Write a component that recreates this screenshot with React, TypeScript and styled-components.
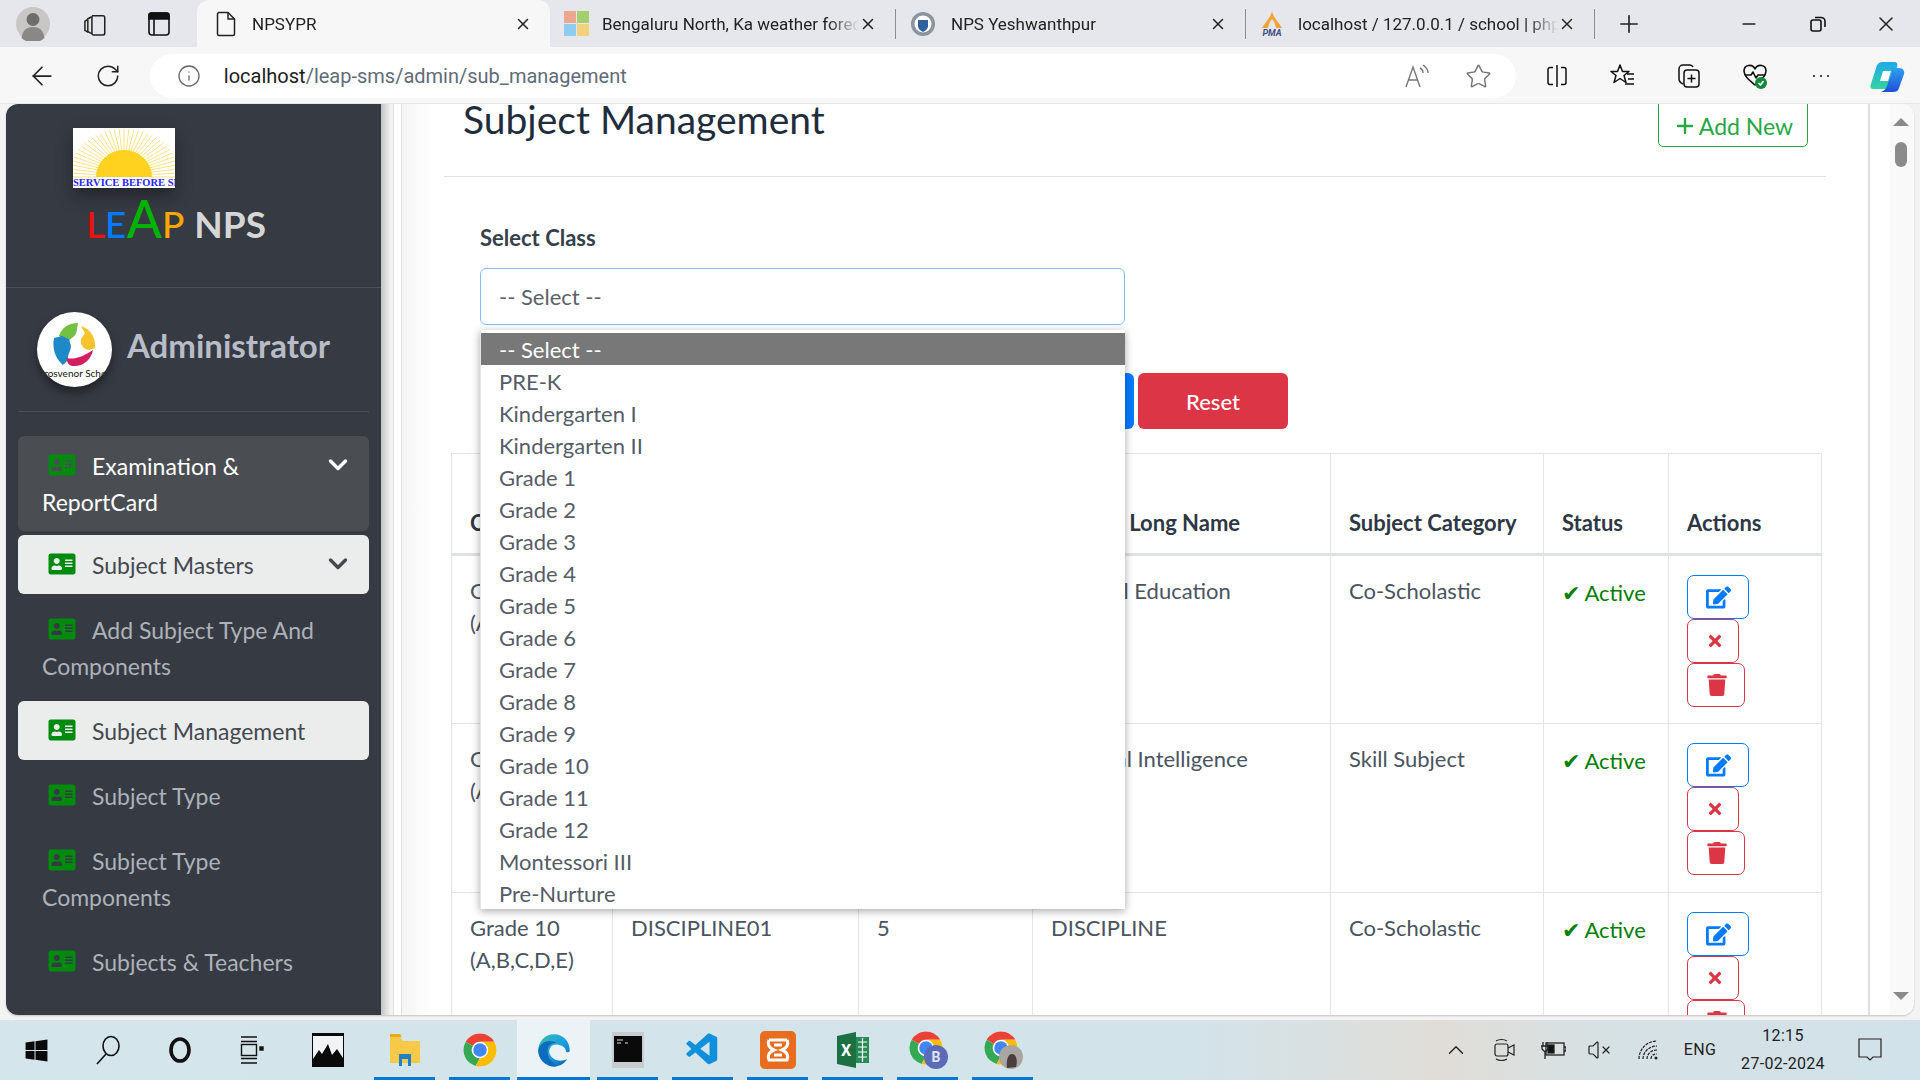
import React from "react";
import styled, { createGlobalStyle } from "styled-components";
import { ArrowLeft, ChevronUp, Info, Minus, Plus, RotateCw, Star, VolumeX, X } from "lucide-react";
import { FaAddressCard, FaEdit, FaTimes, FaTrash, FaWindows } from "react-icons/fa";
import { VscVscode } from "react-icons/vsc";

const sans = `Lato, "Open Sans", sans-serif`;
const chrome = `Roboto, "Noto Sans", sans-serif`;

const GlobalStyle = createGlobalStyle`
  html, body { margin: 0; padding: 0; height: 100%; overflow: hidden; }
  body { font-family: ${sans}; background: #f3f3f3; }
  * { box-sizing: border-box; }
`;

const Screen = styled.div`
  width: 1920px;
  height: 1080px;
  display: flex;
  flex-direction: column;
  overflow: hidden;
`;

/* browser tabs */
const TabStrip = styled.div`
  height: 47px;
  display: flex;
  align-items: stretch;
  background: #e6e7ec;
  font-family: ${chrome};
  color: #222;
`;
const StripButton = styled.div<{ $w: number }>`
  width: ${(p) => p.$w}px;
  display: flex;
  align-items: center;
  justify-content: center;
`;
const Tab = styled.div<{ $w: number; $active?: boolean }>`
  width: ${(p) => p.$w}px;
  display: flex;
  align-items: center;
  padding: 0 18px 0 ${(p) => (p.$active ? 19 : 14)}px;
  font-size: 17px;
  background: ${(p) => (p.$active ? "#f7f7f7" : "transparent")};
  border-radius: 12px 12px 0 0;
`;
const TabIcon = styled.div<{ $w?: number }>`
  width: ${(p) => p.$w ?? 38}px;
  flex: none;
  display: flex;
  align-items: center;
`;
const TabTitle = styled.div`
  flex: 1;
  min-width: 0;
  white-space: nowrap;
  overflow: hidden;
  -webkit-mask-image: linear-gradient(90deg, #000 88%, transparent);
  mask-image: linear-gradient(90deg, #000 88%, transparent);
`;
const TabSep = styled.div`
  width: 1px;
  height: 30px;
  align-self: center;
  background: #8d8d8d;
`;

/* address bar row */
const Toolbar = styled.div`
  height: 57px;
  padding: 7px 0 5px 9px;
  display: flex;
  align-items: stretch;
  background: #f7f7f7;
  border-bottom: 1px solid #e8e8e8;
  font-family: ${chrome};
`;
const ToolButton = styled.div`
  width: 66px;
  display: flex;
  align-items: center;
  justify-content: center;
  color: #222;
`;
const AddressPill = styled.div`
  width: 1368px;
  margin: 0 8px 0 9px;
  padding: 0 24px 0 27px;
  display: flex;
  align-items: center;
  background: #fff;
  border-radius: 23px;
  color: #666;
`;
const Url = styled.div`
  flex: 1;
  margin-left: 23px;
  font-size: 20px;
  color: #5f6b78;
  span { color: #1c1c1c; }
`;
const PillIcon = styled.div`
  margin-left: 35px;
  display: flex;
  color: #777;
`;

/* page frame */
const Desk = styled.div`
  height: 916px;
  padding: 0 6px 5px;
  background: #f3f3f3;
`;
const Frame = styled.div`
  height: 100%;
  display: flex;
  background: #fff;
  border-radius: 12px;
  overflow: hidden;
  box-shadow: 0 1px 2px rgba(0, 0, 0, 0.2);
`;

/* sidebar */
const Sidebar = styled.aside`
  width: 375px;
  flex: none;
  background: #363a42;
  overflow: hidden;
`;
const BrandBlock = styled.div`
  height: 184px;
  padding: 24px 0 0 67px;
  border-bottom: 1px solid #4b4f57;
`;
const LogoBox = styled.div`
  width: 102px;
  height: 60px;
  background: #fff;
  overflow: hidden;
  box-shadow: 0 8px 16px rgba(0, 0, 0, 0.35);
  svg { display: block; }
`;
const LogoCaption = styled.div`
  font-family: "Liberation Serif", serif;
  font-size: 10.5px;
  line-height: 10px;
  font-weight: 700;
  color: #2626f0;
  white-space: nowrap;
  text-align: center;
`;
const Brand = styled.div`
  margin: 4px 0 0 13px;
  display: flex;
  align-items: baseline;
  font-size: 37px;
  line-height: 52px;
  font-weight: 500;
`;
const BrandLetter = styled.span<{ $color: string; $big?: boolean }>`
  color: ${(p) => p.$color};
  font-size: ${(p) => (p.$big ? 52 : 37)}px;
`;
const BrandName = styled.span`
  margin-left: 10px;
  color: #d6d6d6;
  font-weight: 700;
`;
const UserRow = styled.div`
  margin: 0 12px;
  padding: 24px 0 24px 19px;
  display: flex;
  align-items: center;
  gap: 15px;
  border-bottom: 1px solid #4b4f57;
`;
const Avatar = styled.div`
  width: 75px;
  height: 75px;
  border-radius: 50%;
  background: #fff;
  overflow: hidden;
  text-align: center;
  box-shadow: 0 6px 10px rgba(0, 0, 0, 0.4);
  svg { display: block; margin: 10px auto 0; }
`;
const AvatarCaption = styled.div`
  font-size: 10px;
  line-height: 11px;
  color: #111;
  white-space: nowrap;
`;
const UserName = styled.div`
  margin-top: -10px;
  font-size: 33px;
  font-weight: 700;
  color: #b9bcc7;
`;
const Nav = styled.nav`
  padding: 24px 12px 0;
`;
const NavItem = styled.div<{ $tone?: "open" | "active"; $gap?: number }>`
  position: relative;
  margin-bottom: ${(p) => p.$gap ?? 6}px;
  padding: 12px 24px 11px;
  font-size: 23px;
  line-height: 36px;
  border-radius: 6px;
  color: ${(p) => (p.$tone === "open" ? "#fff" : p.$tone === "active" ? "#44484f" : "#adb1b9")};
  background: ${(p) => (p.$tone === "open" ? "#4a4e52" : p.$tone === "active" ? "#ebeded" : "transparent")};
`;
const NavIcon = styled(FaAddressCard)`
  width: 30px;
  height: 24px;
  margin: 0 15px 0 5px;
  color: #008a0e;
  vertical-align: -2px;
`;
const NavChevron = styled.svg`
  position: absolute;
  top: 22px;
  right: 21px;
`;

/* gutters left and right of the page */
const ShadowGutter = styled.div`
  width: 12px;
  flex: none;
  background: linear-gradient(90deg, #c4c4c4, #f3f3f3 80%);
`;
const LineGutter = styled.div<{ $w: number }>`
  width: ${(p) => p.$w}px;
  flex: none;
  border-left: 1px solid #dddfe3;
`;

/* page content */
const Content = styled.main`
  width: 1468px;
  flex: none;
  padding: 0 42px;
  border-left: 1px solid #dddfe3;
  border-right: 1px solid #dddfe3;
  background: linear-gradient(90deg, #f5f5f5, #fff 30px);
  overflow: hidden;
`;
const PageHead = styled.div`
  height: 73px;
  padding: 0 18px 0 19px;
  display: flex;
  justify-content: space-between;
  align-items: flex-start;
  border-bottom: 1px solid #e0e0e0;
`;
const Title = styled.h1`
  margin: -8px 0 0;
  font-size: 39px;
  line-height: 46px;
  font-weight: 400;
  color: #1f2d3d;
`;
const AddButton = styled.button`
  width: 150px;
  height: 60px;
  margin-top: -17px;
  padding: 17px 0 0;
  display: flex;
  align-items: center;
  justify-content: center;
  gap: 2px;
  font: 400 23px ${sans};
  color: #28a745;
  background: #fff;
  border: 1.5px solid #28a745;
  border-radius: 5px;
`;
const FormBlock = styled.div`
  padding: 46px 0 0 36px;
`;
const FieldLabel = styled.label`
  display: block;
  font-size: 22px;
  line-height: 30px;
  font-weight: 700;
  color: #36404c;
`;
const SelectWrap = styled.div`
  position: relative;
  width: 645px;
  margin-top: 15px;
`;
const SelectBox = styled.div`
  height: 57px;
  padding: 0 18px;
  display: flex;
  align-items: center;
  font-size: 22px;
  color: #5a626b;
  border: 1.5px solid #80bdff;
  border-radius: 6px;
`;
const OptionList = styled.div`
  position: absolute;
  z-index: 5;
  top: 62px;
  left: 0;
  width: 100%;
  padding-top: 3px;
  background: #fff;
  border-left: 1px solid #e4e4e4;
  box-shadow: 0 2px 8px rgba(0, 0, 0, 0.35);
`;
const Option = styled.div<{ $selected?: boolean }>`
  height: 32px;
  padding: 0 18px;
  display: flex;
  align-items: center;
  font-size: 22px;
  color: ${(p) => (p.$selected ? "#fff" : "#555c66")};
  background: ${(p) => (p.$selected ? "#787878" : "transparent")};
`;
const ButtonRow = styled.div`
  margin-top: 48px;
  display: flex;
  gap: 4px;
`;
const SolidButton = styled.button<{ $bg: string; $w: number }>`
  width: ${(p) => p.$w}px;
  height: 56px;
  font: 500 22px ${sans};
  color: #fff;
  background: ${(p) => p.$bg};
  border: none;
  border-radius: 6px;
`;
const Table = styled.table`
  width: 1370px;
  margin: 24px 0 0 7px;
  table-layout: fixed;
  border-collapse: collapse;
  font-size: 22px;
  line-height: 32px;
  color: #4a5460;
`;
const Th = styled.th`
  height: 101px;
  padding: 0 18px 14px;
  vertical-align: bottom;
  text-align: left;
  font-weight: 700;
  color: #2e3744;
  border: 1px solid #e2e4e8;
  border-bottom: 3px solid #dee2e6;
`;
const Td = styled.td`
  height: 169px;
  padding: 19px 18px 0;
  vertical-align: top;
  border: 1px solid #e2e4e8;
`;
const StatusText = styled.div`
  margin-top: 2px;
  color: #008000;
  white-space: nowrap;
  span { font-family: "DejaVu Sans", sans-serif; margin-right: 4px; }
`;
const ActionStack = styled.div`
  display: flex;
  flex-direction: column;
  align-items: flex-start;
`;
const ActionButton = styled.button<{ $color: string; $w: number }>`
  width: ${(p) => p.$w}px;
  height: 44px;
  padding: 0 0 0 18px;
  display: flex;
  align-items: center;
  color: ${(p) => p.$color};
  background: #fff;
  border: 1.5px solid ${(p) => p.$color};
  border-radius: 7px;
`;

/* page scrollbar */
const ScrollBar = styled.div`
  width: 36px;
  flex: none;
  padding: 14px 0 15px 13px;
  display: flex;
  flex-direction: column;
  background: linear-gradient(90deg, #fff 13px, #f9f9f9 13px);
`;
const ScrollArrow = styled.div<{ $down?: boolean }>`
  width: 0;
  margin: ${(p) => (p.$down ? "auto 0 0 3px" : "0 0 0 3px")};
  border-left: 8px solid transparent;
  border-right: 8px solid transparent;
  border-${(p) => (p.$down ? "top" : "bottom")}: 8px solid #8a8a8a;
`;
const ScrollThumb = styled.div`
  width: 12px;
  height: 25px;
  margin: 16px 0 0 5px;
  background: #8b8b8b;
  border-radius: 6px;
`;

/* windows taskbar */
const Taskbar = styled.footer`
  height: 60px;
  display: flex;
  align-items: stretch;
  font-family: ${chrome};
  color: #222;
  background: linear-gradient(90deg, #d5e5ec 0%, #d3e3ea 62%, #dddfdc 72%, #e0ddd8 75%, #d6e1e4 84%, #d1e2ea 100%);
`;
const TaskButton = styled.div<{ $w: number; $running?: boolean; $focus?: boolean }>`
  position: relative;
  width: ${(p) => p.$w}px;
  flex: none;
  display: flex;
  align-items: center;
  justify-content: center;
  background: ${(p) => (p.$focus ? "rgba(255,255,255,.55)" : "transparent")};
  &::after {
    content: "";
    display: ${(p) => (p.$running ? "block" : "none")};
    position: absolute;
    bottom: 0;
    left: ${(p) => (p.$focus ? 0 : 7)}px;
    right: ${(p) => (p.$focus ? 0 : 7)}px;
    height: 3px;
    background: #0078d4;
  }
`;
const Tray = styled.div`
  margin-left: auto;
  padding-right: 23px;
  display: flex;
  align-items: stretch;
`;
const TrayItem = styled.div<{ $w: number }>`
  width: ${(p) => p.$w}px;
  display: flex;
  flex-direction: column;
  align-items: center;
  justify-content: center;
  font-size: 16px;
  line-height: 28px;
  letter-spacing: 0.3px;
`;

const IdleChevron = ({ color }: { color: string }) => (
  <NavChevron width="20" height="14" viewBox="0 0 20 14" fill="none" stroke={color} strokeWidth="3.4" strokeLinecap="round" strokeLinejoin="round">
    <path d="M2.5 3l7.5 7.5L17.5 3" />
  </NavChevron>
);

const ChromeLogo = ({ size = 36 }: { size?: number }) => (
  <svg width={size} height={size} viewBox="0 0 48 48">
    <circle cx="24" cy="24" r="22" fill="#fff" />
    <path d="M4.95 13A22 22 0 0 1 43.05 13H24A11 11 0 0 0 14.47 18.5Z" fill="#ea4335" />
    <path d="M4.95 13L14.47 18.5A11 11 0 0 0 24 35L18 45.2A22 22 0 0 1 4.95 13Z" fill="#34a853" />
    <path d="M43.05 13A22 22 0 0 1 18 45.2L24 35A11 11 0 0 0 24 13Z" fill="#fbbc04" />
    <circle cx="24" cy="24" r="9" fill="#4285f4" />
  </svg>
);

const ProfileIcon = () => (
  <svg width="34" height="34" viewBox="0 0 34 34">
    <circle cx="17" cy="17" r="17" fill="#c9c7c5" />
    <circle cx="17" cy="12.5" r="6.5" fill="#6f6d6b" />
    <path d="M5.5 31c1-8 5.5-11 11.5-11s10.500 3 11.500 11a17 17 0 0 1-23 0z" fill="#8a8886" />
  </svg>
);

const Stroke = ({ size, children, w = 1.5 }: { size: number; children: React.ReactNode; w?: number }) => (
  <svg width={size} height={size} viewBox="0 0 24 24" fill="none" stroke="currentColor" strokeWidth={w} strokeLinejoin="round" strokeLinecap="round">
    {children}
  </svg>
);

const SunLogo = () => (
  <svg width="102" height="50" viewBox="0 0 102 50">
    {Array.from({ length: 37 }, (_, i) => {
      const a = (Math.PI * i) / 36;
      return (
        <line key={i} x1={51 + 26 * Math.cos(a)} y1={49 - 26 * Math.sin(a)} x2={51 + 56 * Math.cos(a)} y2={49 - 48 * Math.sin(a)} stroke="#fde27c" strokeWidth="1" />
      );
    })}
    <path d="M23 49a28 27 0 0 1 56 0z" fill="#ffd21f" />
  </svg>
);

const HandsLogo = () => (
  <svg width="44" height="46" viewBox="0 0 44 46">
    <path d="M6 14C9 5 16 1 25 1l-1 6c0 6-5 9-9 12z" fill="#74c043" />
    <path d="M28 4c10 3 15 12 14 22l-6 2c-6-1-9-6-8-11l4-6z" fill="#f6c42c" />
    <path d="M1 16c-2 10 1 20 9 27l5-5c-1-5 3-9 3-14l-2-7-7-3z" fill="#1e88c9" />
    <path d="M14 36c7 2 15-1 26-8-2 10-10 17-21 16-3-1-6-4-5-8z" fill="#d21f5f" />
  </svg>
);

const taskApps = [
  { w: 75, icon: (
    <svg width="32" height="34" viewBox="0 0 32 34">
      <path d="M1 4h10l3 4h17v22H1z" fill="#f7c948" />
      <path d="M1 1h10l2 3H1z" fill="#e8a81c" />
      <path d="M10 33V21h12v12h-3v-7h-6v7z" fill="#1f7fc7" />
    </svg>
  ) },
  { w: 75, icon: <ChromeLogo /> },
  { w: 73, focus: true, icon: (
    <svg width="36" height="36" viewBox="0 0 48 48">
      <defs>
        <linearGradient id="edgeA" x1="0" y1="0" x2="1" y2="1">
          <stop offset="0" stopColor="#35c1b0" />
          <stop offset=".55" stopColor="#1b9de2" />
          <stop offset="1" stopColor="#0c59a4" />
        </linearGradient>
      </defs>
      <path d="M45 25C45 12 36 3 24 3 12 3 3 13 3 24c0 13 10 22 21 22 7 0 13-3 18-10-6 3-13 3-18 0-6-4-8-10-5-15 2-4 7-5 11-4 6 1 10 5 10 9 0 2 5 1 5-1z" fill="url(#edgeA)" />
      <path d="M3 24c2-8 9-12 15-12 4 0 7 1 10 3-6-1-11 2-12 7-2 8 2 17 12 23-2 1-3 1-5 1C12 45 3 36 3 24z" fill="#0f6cbd" />
    </svg>
  ) },
  { w: 75, icon: (
    <svg width="34" height="38" viewBox="0 0 34 38">
      <rect x="1" y="1" width="32" height="36" rx="1" fill="#c9ccce" />
      <rect x="3" y="5" width="28" height="26" fill="#0a0a0a" />
      <path d="M6 9h6M6 12h4M14 12h3" stroke="#ddd" strokeWidth="1.2" />
    </svg>
  ) },
  { w: 75, icon: <VscVscode size={38} color="#0f8fdc" /> },
  { w: 75, icon: (
    <svg width="36" height="38" viewBox="0 0 36 38" fill="none">
      <rect width="36" height="38" rx="5" fill="#e86d1f" />
      <path d="M9 9h18M9 9c-2 4 0 8 5 10-5 2-7 6-5 10h18c2-4 0-8-5-10 5-2 7-6 5-10M14 14h8M14 24h8" stroke="#fff" strokeWidth="3" />
    </svg>
  ) },
  { w: 75, icon: (
    <svg width="34" height="36" viewBox="0 0 34 36">
      <path d="M1 4l19-4v36L1 32z" fill="#1d7044" />
      <rect x="20" y="5" width="13" height="26" fill="#2a8a56" />
      <path d="M22 10h9M22 15h9M22 20h9M22 25h9M26.500 6v24" stroke="#fff" strokeWidth="1.2" />
      <text x="10" y="24" textAnchor="middle" fontSize="16" fontWeight="700" fill="#fff" fontFamily="Roboto, sans-serif">X</text>
    </svg>
  ) },
  { w: 75, icon: (
    <svg width="40" height="40" viewBox="0 0 40 40">
      <ChromeLogo />
      <circle cx="28" cy="27" r="12" fill="#5b6bb8" />
      <text x="28" y="32" textAnchor="middle" fontSize="14" fontWeight="700" fill="#dfe3f5" fontFamily="Roboto, sans-serif">B</text>
    </svg>
  ) },
  { w: 75, icon: (
    <svg width="40" height="40" viewBox="0 0 40 40">
      <ChromeLogo />
      <circle cx="28" cy="27" r="12" fill="#a9a5a1" />
      <path d="M24 38c-1-8 1-14 5-14s6 6 4 13z" fill="#4a3f3c" />
    </svg>
  ) },
];

const classOptions = [
  "-- Select --", "PRE-K", "Kindergarten I", "Kindergarten II", "Grade 1", "Grade 2", "Grade 3", "Grade 4", "Grade 5",
  "Grade 6", "Grade 7", "Grade 8", "Grade 9", "Grade 10", "Grade 11", "Grade 12", "Montessori III", "Pre-Nurture",
];

const subjects = [
  { code: "PE01", order: "3", name: "Physical Education", category: "Co-Scholastic" },
  { code: "AI01", order: "4", name: "Artificial Intelligence", category: "Skill Subject" },
  { code: "DISCIPLINE01", order: "5", name: "DISCIPLINE", category: "Co-Scholastic" },
];

const colWidths = [161, 246, 174, 298, 213, 125, 153];

const App = () => (
  <Screen>
    <GlobalStyle />
    <TabStrip>
      <StripButton $w={66}><ProfileIcon /></StripButton>
      <StripButton $w={60}>
        <Stroke size={28} w={1.3}><path d="M9 5h9a1.500 1.500 0 0 1 1.500 1.500V20a1.500 1.500 0 0 1-1.500 1.500H10A1.500 1.500 0 0 1 8.500 20V6" /><path d="M8 6L5 7.500v11L8 20M5 8L2.500 9.500v8L5 19" /></Stroke>
      </StripButton>
      <StripButton $w={66}>
        <svg width="24" height="26" viewBox="0 0 24 26" fill="none" stroke="#111" strokeWidth="1.6"><rect x="2" y="2" width="20" height="22" rx="3" /><path d="M2 4a2 2 0 0 1 2-2h16a2 2 0 0 1 2 2v4H2z" fill="#111" /><path d="M7 8v16" /></svg>
      </StripButton>
      <StripButton $w={5} />
      <Tab $w={353} $active>
        <TabIcon $w={36}>
          <svg width="20" height="26" viewBox="0 0 20 26" fill="none" stroke="#222" strokeWidth="1.5" strokeLinejoin="round"><path d="M3 1.500h9l6.500 6.500v15a1.500 1.500 0 0 1-1.500 1.500H3A1.500 1.500 0 0 1 1.500 23V3A1.500 1.500 0 0 1 3 1.500z" /><path d="M12 1.500V8h6.500" /></svg>
        </TabIcon>
        <TabTitle>NPSYPR</TabTitle>
        <X size={18} />
      </Tab>
      <Tab $w={345}>
        <TabIcon>
          <svg width="25" height="25" viewBox="0 0 25 25"><rect width="12" height="12" fill="#eda68f" /><rect x="13" width="12" height="12" fill="#a5cf6d" /><rect y="13" width="12" height="12" fill="#8dcdf0" /><rect x="13" y="13" width="12" height="12" fill="#f3d27e" /></svg>
        </TabIcon>
        <TabTitle>Bengaluru North, Ka weather forecast</TabTitle>
        <X size={18} />
      </Tab>
      <TabSep />
      <Tab $w={349}>
        <TabIcon $w={41}>
          <svg width="26" height="26" viewBox="0 0 26 26"><circle cx="13" cy="13" r="12" fill="#8b949c" /><circle cx="13" cy="13" r="8.500" fill="#fff" /><path d="M8 9h10v6c0 3-3 5-5 6-2-1-5-3-5-6z" fill="#2f5f9e" /></svg>
        </TabIcon>
        <TabTitle>NPS Yeshwanthpur</TabTitle>
        <X size={18} />
      </Tab>
      <TabSep />
      <Tab $w={348}>
        <TabIcon>
          <svg width="24" height="26" viewBox="0 0 24 26"><path d="M12 0c1 6 6 10 10 17h-6c-1-5-3-8-4-9-1 1-3 4-4 9H2C6 10 11 6 12 0z" fill="#f2a33a" /><text x="12" y="25" textAnchor="middle" fontSize="9" fontWeight="700" fontStyle="italic" fill="#3d4f86" fontFamily="Roboto, sans-serif">PMA</text></svg>
        </TabIcon>
        <TabTitle>localhost / 127.0.0.1 / school | phpMyAdmin</TabTitle>
        <X size={18} />
      </Tab>
      <TabSep />
      <StripButton $w={67}><Plus size={28} strokeWidth={1.4} /></StripButton>
      <StripButton $w={52} />
      <StripButton $w={69}><Minus size={20} strokeWidth={2} /></StripButton>
      <StripButton $w={69}>
        <svg width="18" height="18" viewBox="0 0 18 18" fill="none" stroke="#111" strokeWidth="1.6"><rect x="2" y="5" width="10" height="11" rx="2" /><path d="M6 2.500h6a4 4 0 0 1 4 4V12" /></svg>
      </StripButton>
      <StripButton $w={68}><X size={24} strokeWidth={1.5} /></StripButton>
    </TabStrip>

    <Toolbar>
      <ToolButton><ArrowLeft size={30} strokeWidth={1.4} /></ToolButton>
      <ToolButton><RotateCw size={26} strokeWidth={1.4} /></ToolButton>
      <AddressPill>
        <Info size={24} strokeWidth={1.3} />
        <Url><span>localhost</span>/leap-sms/admin/sub_management</Url>
        <PillIcon>
          <svg width="26" height="26" viewBox="0 0 26 26" fill="none" stroke="currentColor" strokeWidth="1.4"><path d="M2 24L9 4l7 20M5 17h8" /><path d="M16 5c2 1 3 3 3 5M19 2c3 2 5 5 5 8" /></svg>
        </PillIcon>
        <PillIcon><Star size={27} strokeWidth={1.3} /></PillIcon>
      </AddressPill>
      <ToolButton>
        <svg width="24" height="24" viewBox="0 0 24 24" fill="none" stroke="#111" strokeWidth="1.5"><path d="M8 3.500H5A2 2 0 0 0 3 5.500v13a2 2 0 0 0 2 2h3M16 3.500h3a2 2 0 0 1 2 2v13a2 2 0 0 1-2 2h-3M12 1v22" /></svg>
      </ToolButton>
      <ToolButton>
        <svg width="26" height="26" viewBox="0 0 26 26" fill="none" stroke="#111" strokeWidth="1.5" strokeLinejoin="round"><path d="M10 2l2.500 6.500H19l-5 4 2 7-6-4-6 4 2-7-5-4h6.500z" /><path d="M17 11h7M18 16h6M15 21h9" /></svg>
      </ToolButton>
      <ToolButton>
        <svg width="28" height="28" viewBox="0 0 28 28" fill="none" stroke="#111" strokeWidth="1.5" strokeLinejoin="round"><path d="M8 22c-2-1-4-3-4-5V7a4 4 0 0 1 4-4h7a4 4 0 0 1 3 2" /><rect x="9" y="8" width="15" height="17" rx="3" /><path d="M16.500 12.500v8M12.500 16.500h8" /></svg>
      </ToolButton>
      <ToolButton>
        <svg width="28" height="28" viewBox="0 0 28 28" fill="none" stroke="#111" strokeWidth="1.6" strokeLinejoin="round"><path d="M14 23C8 18 3 14 3 9c0-6 8-8 11-2 3-6 11-4 11 2 0 5-5 9-11 14z" /><path d="M4 13h6l2-3 3 6 2-3h7" /><circle cx="20" cy="21" r="6" fill="#138a38" stroke="none" /><path d="M17.500 21l2 2 3-4" stroke="#fff" /></svg>
      </ToolButton>
      <ToolButton><Stroke size={24} w={2.2}><path d="M5 12h.01M12 12h.01M19 12h.01" /></Stroke></ToolButton>
      <ToolButton>
        <svg width="36" height="36" viewBox="0 0 36 36">
          <defs>
            <linearGradient id="copA" x1="0" y1="0" x2="0" y2="1"><stop offset="0" stopColor="#1fa9e8" /><stop offset="1" stopColor="#34d3a0" /></linearGradient>
            <linearGradient id="copB" x1="0" y1="0" x2="0" y2="1"><stop offset="0" stopColor="#2ea0f0" /><stop offset="1" stopColor="#1f4fd8" /></linearGradient>
          </defs>
          <path d="M13 4h12c3 0 4 2 3 5l-6 17c-1 3-3 5-6 5H4c-3 0-3-3-2-5l5-16c1-4 3-6 6-6z" fill="url(#copA)" />
          <path d="M21 10h9c4 0 6 3 5 6l-5 14c-1 3-3 4-6 4H12c3-1 5-3 6-6l5-14c0-2-1-4-2-4z" fill="url(#copB)" />
          <path d="M14 13h8l-3 10h-8z" fill="#fff" />
        </svg>
      </ToolButton>
    </Toolbar>

    <Desk>
      <Frame>
        <Sidebar>
          <BrandBlock>
            <LogoBox>
              <SunLogo />
              <LogoCaption>SERVICE BEFORE SELF</LogoCaption>
            </LogoBox>
            <Brand>
              <BrandLetter $color="#f01010">L</BrandLetter>
              <BrandLetter $color="#007bff">E</BrandLetter>
              <BrandLetter $color="#00b300" $big>A</BrandLetter>
              <BrandLetter $color="#ffa500">P</BrandLetter>
              <BrandName>NPS</BrandName>
            </Brand>
          </BrandBlock>
          <UserRow>
            <Avatar>
              <HandsLogo />
              <AvatarCaption>Grosvenor School</AvatarCaption>
            </Avatar>
            <UserName>Administrator</UserName>
          </UserRow>
          <Nav>
            <NavItem $tone="open" $gap={4}><NavIcon />Examination &amp; ReportCard<IdleChevron color="#fff" /></NavItem>
            <NavItem $tone="active"><NavIcon />Subject Masters<IdleChevron color="#44484f" /></NavItem>
            <NavItem><NavIcon />Add Subject Type And Components</NavItem>
            <NavItem $tone="active"><NavIcon />Subject Management</NavItem>
            <NavItem><NavIcon />Subject Type</NavItem>
            <NavItem><NavIcon />Subject Type Components</NavItem>
            <NavItem><NavIcon />Subjects &amp; Teachers</NavItem>
          </Nav>
        </Sidebar>
        <ShadowGutter />
        <LineGutter $w={8} />
        <Content>
          <PageHead>
            <Title>Subject Management</Title>
            <AddButton><Plus size={24} strokeWidth={2.4} />Add New</AddButton>
          </PageHead>
          <FormBlock>
            <FieldLabel>Select Class</FieldLabel>
            <SelectWrap>
              <SelectBox>-- Select --</SelectBox>
              <OptionList>
                {classOptions.map((name, i) => (
                  <Option key={name} $selected={i === 0}>{name}</Option>
                ))}
              </OptionList>
            </SelectWrap>
            <ButtonRow>
              <SolidButton $bg="#007bff" $w={654}>Search</SolidButton>
              <SolidButton $bg="#dc3545" $w={150}>Reset</SolidButton>
            </ButtonRow>
          </FormBlock>
          <Table>
            <colgroup>
              {colWidths.map((w, i) => <col key={i} style={{ width: w }} />)}
            </colgroup>
            <thead>
              <tr>
                {["Class", "Subject Code", "Sort Order", "Subject Long Name", "Subject Category", "Status", "Actions"].map((h) => (
                  <Th key={h}>{h}</Th>
                ))}
              </tr>
            </thead>
            <tbody>
              {subjects.map((row) => (
                <tr key={row.code}>
                  <Td>Grade 10 (A,B,C,D,E)</Td>
                  <Td>{row.code}</Td>
                  <Td>{row.order}</Td>
                  <Td>{row.name}</Td>
                  <Td>{row.category}</Td>
                  <Td><StatusText><span>✔</span>Active</StatusText></Td>
                  <Td>
                    <ActionStack>
                      <ActionButton $color="#007bff" $w={62}><FaEdit size={25} /></ActionButton>
                      <ActionButton $color="#dc3545" $w={52}><FaTimes size={18} /></ActionButton>
                      <ActionButton $color="#dc3545" $w={58}><FaTrash size={22} /></ActionButton>
                    </ActionStack>
                  </Td>
                </tr>
              ))}
            </tbody>
          </Table>
        </Content>
        <LineGutter $w={8} />
        <ScrollBar>
          <ScrollArrow />
          <ScrollThumb />
          <ScrollArrow $down />
        </ScrollBar>
      </Frame>
    </Desk>

    <Taskbar>
      <TaskButton $w={72}><FaWindows size={25} color="#0a0a0a" /></TaskButton>
      <TaskButton $w={72}>
        <svg width="26" height="30" viewBox="0 0 26 30" fill="none" stroke="#111" strokeWidth="1.6"><ellipse cx="16" cy="11" rx="8" ry="9.500" /><path d="M11 19L2 29" /></svg>
      </TaskButton>
      <TaskButton $w={72}>
        <svg width="24" height="28" viewBox="0 0 24 28" fill="none" stroke="#111" strokeWidth="3.6"><ellipse cx="12" cy="14" rx="9" ry="11" /></svg>
      </TaskButton>
      <TaskButton $w={72}>
        <svg width="24" height="28" viewBox="0 0 24 28" fill="none" stroke="#111" strokeWidth="1.4"><path d="M1 1h16M1 5.500h16M1 27h16M1 22.500h16" /><rect x="1.500" y="8.500" width="15" height="11" /><rect x="20" y="11" width="3" height="3" fill="#111" /></svg>
      </TaskButton>
      <TaskButton $w={79}>
        <svg width="32" height="34" viewBox="0 0 32 34"><rect x="0" y="0" width="32" height="34" fill="#0a0a0a" /><path d="M1 3h30v22l-6-9-5 6-4-11-6 10-3-4-6 9z" fill="#f2f3f4" /></svg>
      </TaskButton>
      {taskApps.map((app, i) => (
        <TaskButton key={i} $w={app.w} $running $focus={app.focus}>{app.icon}</TaskButton>
      ))}
      <Tray>
        <TrayItem $w={48}><ChevronUp size={26} strokeWidth={1.3} /></TrayItem>
        <TrayItem $w={49}>
          <svg width="24" height="26" viewBox="0 0 24 26" fill="none" stroke="#222" strokeWidth="1.2"><rect x="2" y="7" width="13" height="12" rx="2" /><path d="M15 11l6-3v10l-6-3M3 4c3-2 8-2 11 0M3 22c3 2 8 2 11 0" /></svg>
        </TrayItem>
        <TrayItem $w={48}>
          <svg width="26" height="20" viewBox="0 0 26 20" fill="none" stroke="#222" strokeWidth="1.3"><rect x="6" y="3" width="18" height="12" /><rect x="8" y="5" width="6" height="8" fill="#111" /><path d="M1 6h8M3 2v4M7 2v4M2 6v3l3 3 3-3V6M5 12v7M24 7h2v4h-2" /></svg>
        </TrayItem>
        <TrayItem $w={44}><VolumeX size={24} strokeWidth={1.2} /></TrayItem>
        <TrayItem $w={56}>
          <svg width="22" height="20" viewBox="0 0 22 20" fill="none" stroke="#222" strokeWidth="1.2"><path d="M1 19C1 9 9 1 19 1M5 19c0-7 6-13 14-13M9 19c0-5 4-9 10-9M13 19c0-3 2-5 6-5" strokeDasharray="3 1" /><circle cx="18" cy="18" r="1.500" fill="#222" stroke="none" /></svg>
        </TrayItem>
        <TrayItem $w={46}>ENG</TrayItem>
        <TrayItem $w={120}><div>12:15</div><div>27-02-2024</div></TrayItem>
        <TrayItem $w={54}>
          <svg width="26" height="26" viewBox="0 0 26 26" fill="none" stroke="#222" strokeWidth="1.2"><path d="M2 2h22v18h-8l-3 3-3-3H2z" /></svg>
        </TrayItem>
      </Tray>
    </Taskbar>
  </Screen>
);

export default App;
